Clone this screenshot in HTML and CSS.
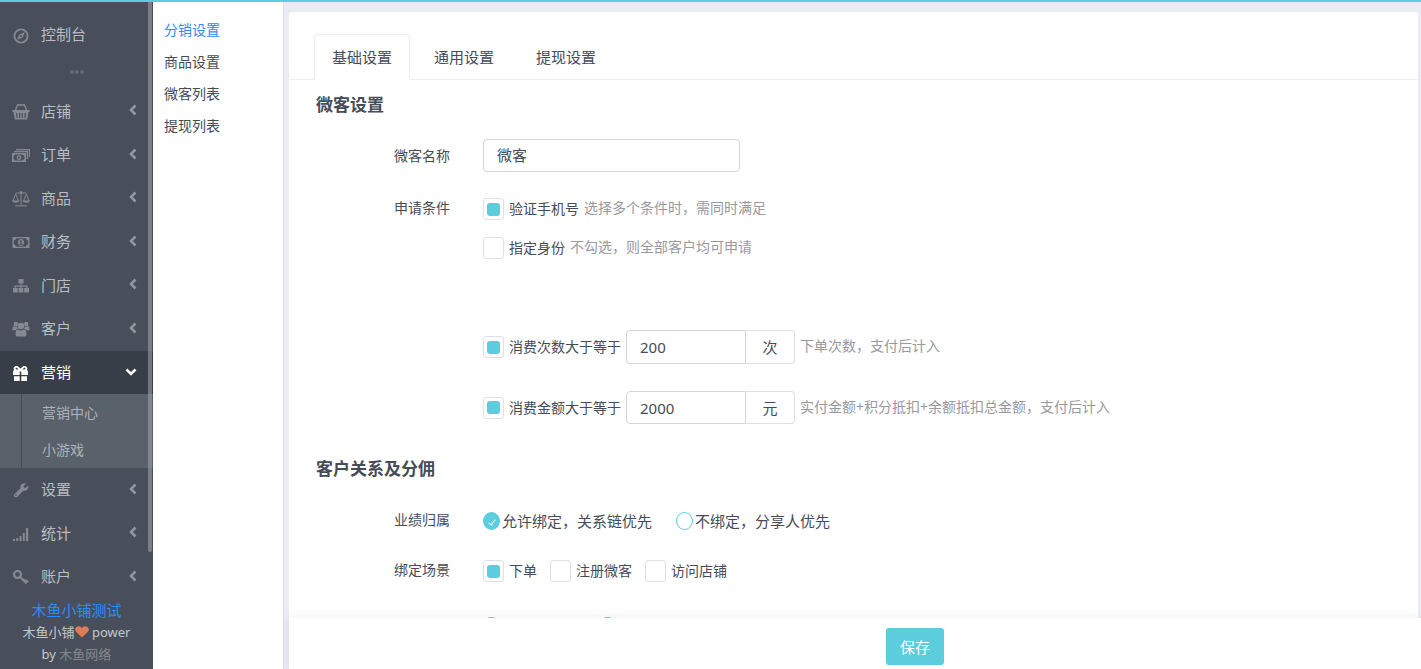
FILE: index.html
```html
<!DOCTYPE html>
<html lang="zh-CN">
<head>
<meta charset="utf-8">
<title>分销设置</title>
<link rel="stylesheet" href="styles.css">
</head>
<body>
<div class="app">
  <aside class="sidebar">
    <a class="nav-link home" href="#">
      <svg class="icon" viewBox="0 0 18 18"><circle cx="9" cy="9" r="6.6" fill="none" stroke="currentColor" stroke-width="1.8"/><path fill-rule="evenodd" d="M12.8 5.2 10.7 10.6 5.2 12.8 7.3 7.4ZM9 8a1 1 0 1 0 0 2 1 1 0 0 0 0-2Z"/></svg>
      <span>控制台</span>
    </a>
    <div class="divider"><i></i><i></i><i></i></div>
    <nav class="nav">
      <a class="nav-link" href="#">
        <svg class="icon" viewBox="0 0 18 18"><path d="M3.500 7 5.500 2h7l2 5" fill="none" stroke="currentColor" stroke-width="1.300"/><path fill-rule="evenodd" d="M.5 7h17v2h-1l-1.300 7.500H2.800L1.500 9h-1ZM4 10l.6 5h1.100L5.300 10Zm3 0 .2 5h1.100V10Zm2.700 0v5h1.100l.2-5Zm3 0-.4 5h1.100l.6-5Z"/></svg>
        <span>店铺</span>
        <svg class="arrow" viewBox="0 0 8 12"><path d="M6.500 1.500 2 6l4.500 4.500"/></svg>
      </a>
      <a class="nav-link" href="#">
        <svg class="icon" viewBox="0 0 18 18"><path d="M4 3h14v8h-1.200V4.200H4ZM2 5h14v8h-1.200V6.200H2Z"/><path fill-rule="evenodd" d="M0 7h14v9H0ZM3 8.500A2 2 0 0 1 1.500 10v3A2 2 0 0 1 3 14.500h8a2 2 0 0 1 1.500-1.500v-3A2 2 0 0 1 11 8.500ZM7 9c1.400 0 2.300 1.100 2.300 2.500S8.400 14 7 14s-2.300-1.100-2.300-2.500S5.600 9 7 9Zm0 1.200c-.6 0-.9.6-.9 1.300s.3 1.300.9 1.300.9-.6.9-1.300-.3-1.300-.9-1.300Z"/></svg>
        <span>订单</span>
        <svg class="arrow" viewBox="0 0 8 12"><path d="M6.500 1.500 2 6l4.500 4.500"/></svg>
      </a>
      <a class="nav-link" href="#">
        <svg class="icon" viewBox="0 0 18 18"><path d="M9 1v14.500M3.500 3h11M3 15.900h12M3.700 4 .9 11M3.700 4l2.800 7M14.300 4l-2.800 7M14.300 4l2.800 7" fill="none" stroke="currentColor"/><circle cx="9" cy="2.600" r="1.300"/><path d="M0 10.500h7.400c-.5 3-6.900 3-7.400 0ZM10.600 10.500H18c-.5 3-6.900 3-7.400 0Z"/></svg>
        <span>商品</span>
        <svg class="arrow" viewBox="0 0 8 12"><path d="M6.500 1.500 2 6l4.500 4.500"/></svg>
      </a>
      <a class="nav-link" href="#">
        <svg class="icon" viewBox="0 0 18 18"><path fill-rule="evenodd" d="M.5 4h17v11H.5ZM4 5.300A2.200 2.200 0 0 1 1.800 7.500v4A2.200 2.200 0 0 1 4 13.700h10a2.200 2.200 0 0 1 2.200-2.200v-4A2.200 2.200 0 0 1 14 5.300ZM9 6c1.900 0 3 1.600 3 3.500S10.900 13 9 13s-3-1.600-3-3.500S7.100 6 9 6ZM7.500 8v.8h.9v2.300h-.9v.9h3v-.9h-.8V7.300h-.8Z"/></svg>
        <span>财务</span>
        <svg class="arrow" viewBox="0 0 8 12"><path d="M6.500 1.500 2 6l4.500 4.500"/></svg>
      </a>
      <a class="nav-link" href="#">
        <svg class="icon" viewBox="0 0 18 18"><path d="M6.500 2h5v4.500h-2v2h6V11H17v4.500h-4.800V11h2.100V9.700H9.600V11h1.800v4.500H6.600V11h1.800V9.700H3.700V11h2.100v4.500H1V11h1.500V8.500h6v-2h-2Z"/></svg>
        <span>门店</span>
        <svg class="arrow" viewBox="0 0 8 12"><path d="M6.500 1.500 2 6l4.500 4.500"/></svg>
      </a>
      <a class="nav-link" href="#">
        <svg class="icon" viewBox="0 0 18 18"><circle cx="3.800" cy="4" r="2.200"/><circle cx="14.200" cy="4" r="2.200"/><circle cx="9" cy="6" r="3.300"/><path d="M.5 10V8c0-1.500 1-2 2-1.700 1 .5 1.800.4 2.600 0 .1 1.300.4 2 1 2.700-1.200 0-2 .4-2.700 1.200H1.500C.9 10.200.5 10.100.5 10ZM17.500 10V8c0-1.500-1-2-2-1.700-1 .5-1.800.4-2.600 0-.1 1.300-.4 2-1 2.700 1.200 0 2 .4 2.700 1.200h1.900c.6 0 1-.1 1-.2ZM3.500 14.200c0-3 .9-4.700 2.700-4.600 2 1.200 3.600 1.200 5.600 0 1.800-.1 2.700 1.600 2.700 4.600 0 1.400-.8 2.300-2.100 2.300H5.600c-1.300 0-2.100-.9-2.100-2.300Z"/></svg>
        <span>客户</span>
        <svg class="arrow" viewBox="0 0 8 12"><path d="M6.500 1.500 2 6l4.500 4.500"/></svg>
      </a>
      <div class="nav-group">
        <a class="nav-link active" href="#">
          <svg class="icon" viewBox="0 0 18 18"><path d="M1 7.500 2 6C.8 3.500 3.300 1.200 5.700 2.300L8.500 4.500l2.800-2.200C13.700 1.200 16.200 3.500 15 6l1 1.500V11H9.300V7.500H7.700V11H1ZM3.500 4.500c.3 1 1.500 1.200 3 1C5.200 3.500 3.700 3.100 3.500 4.500Zm10 0c-.2-1.400-1.700-1-3 1 1.500.2 2.700 0 3-1Z" fill-rule="evenodd"/><path d="M2 12.300h5.700V17H2ZM9.300 12.300H15V17H9.300Z"/></svg>
          <span>营销</span>
          <svg class="arrow down" viewBox="0 0 12 8"><path d="M1.500 1.500 6 6l4.500-4.500"/></svg>
        </a>
        <div class="subnav">
          <a href="#">营销中心</a>
          <a href="#">小游戏</a>
        </div>
      </div>
      <a class="nav-link" href="#">
        <svg class="icon" viewBox="0 0 18 18"><path fill-rule="evenodd" d="M16.400 5.200c.4 3-2.300 5.300-5.200 4.500l-6 6.200c-1.800 1.500-4.300-.8-2.900-2.700l6.200-5.800c-.8-3 1.400-5.500 4.700-5.200l.7.700L11.500 5l.4 1.600 1.700.3 2.300-2.200ZM4 13.300a.8.800 0 1 0 0 1.600.8.800 0 0 0 0-1.600Z"/></svg>
        <span>设置</span>
        <svg class="arrow" viewBox="0 0 8 12"><path d="M6.500 1.500 2 6l4.500 4.500"/></svg>
      </a>
      <a class="nav-link" href="#">
        <svg class="icon" viewBox="0 0 18 18"><path d="M1 14h2v2H1ZM4.200 13h2v3h-2ZM7.500 11h2v5h-2ZM10.800 8h2v8h-2ZM14 3h2.200v13H14Z"/></svg>
        <span>统计</span>
        <svg class="arrow" viewBox="0 0 8 12"><path d="M6.500 1.500 2 6l4.500 4.500"/></svg>
      </a>
      <a class="nav-link" href="#">
        <svg class="icon" viewBox="0 0 18 18"><circle cx="5.500" cy="6.500" r="3.500" fill="none" stroke="currentColor" stroke-width="2.200"/><path d="m8 8.800 6.500 6.700M11 12.500l1.500-1.700M12.500 14l1.700-1.700 2 1.900" fill="none" stroke="currentColor" stroke-width="1.800"/></svg>
        <span>账户</span>
        <svg class="arrow" viewBox="0 0 8 12"><path d="M6.500 1.500 2 6l4.500 4.500"/></svg>
      </a>
    </nav>
    <footer class="credit">
      <a class="shop" href="#">木鱼小铺测试</a>
      <p>木鱼小铺<svg class="heart" viewBox="0 0 14 12"><path d="M7 11.600 1.300 6C-1.300 3.200 1 .2 3.700.2 5.300.2 6.400 1 7 2.200 7.600 1 8.700.2 10.300.2c2.700 0 5 3 2.400 5.800Z"/></svg> power<br>by <a class="company" href="#">木鱼网络</a></p>
    </footer>
    <div class="scrollbar"></div>
  </aside>

  <nav class="section-nav">
    <a class="current" href="#">分销设置</a>
    <a href="#">商品设置</a>
    <a href="#">微客列表</a>
    <a href="#">提现列表</a>
  </nav>

  <form class="main">
    <div class="viewport">
      <div class="card">
        <div class="tabs" role="tablist">
          <button class="tab selected" type="button" role="tab" aria-selected="true">基础设置</button>
          <button class="tab" type="button" role="tab" aria-selected="false">通用设置</button>
          <button class="tab" type="button" role="tab" aria-selected="false">提现设置</button>
        </div>

        <h2>微客设置</h2>
        <div class="row row-name">
          <label class="field" for="name">微客名称</label>
          <input class="text name" id="name" type="text" value="微客">
        </div>
        <div class="row row-conditions">
          <span class="field">申请条件</span>
          <div class="conditions">
            <div class="line">
              <label class="option"><input class="check" type="checkbox" checked>验证手机号</label>
              <span class="hint">选择多个条件时，需同时满足</span>
            </div>
            <div class="line">
              <label class="option"><input class="check" type="checkbox">指定身份</label>
              <span class="hint">不勾选，则全部客户均可申请</span>
            </div>
            <div class="line thresholds">
              <label class="option"><input class="check" type="checkbox" checked>消费次数大于等于</label>
              <div class="group"><input class="text" type="text" value="200" aria-label="消费次数"><span class="unit">次</span></div>
              <span class="hint">下单次数，支付后计入</span>
            </div>
            <div class="line amount">
              <label class="option"><input class="check" type="checkbox" checked>消费金额大于等于</label>
              <div class="group"><input class="text" type="text" value="2000" aria-label="消费金额"><span class="unit">元</span></div>
              <span class="hint">实付金额+积分抵扣+余额抵扣总金额，支付后计入</span>
            </div>
          </div>
        </div>

        <h2 class="relations">客户关系及分佣</h2>
        <div class="row row-owner">
          <span class="field">业绩归属</span>
          <div class="radios">
            <label class="choice"><input class="radio" type="radio" name="owner" checked>允许绑定，关系链优先</label>
            <label class="choice"><input class="radio" type="radio" name="owner">不绑定，分享人优先</label>
          </div>
        </div>
        <div class="row row-scene">
          <span class="field">绑定场景</span>
          <div class="checks">
            <label class="option"><input class="check" type="checkbox" checked>下单</label>
            <label class="option"><input class="check" type="checkbox">注册微客</label>
            <label class="option"><input class="check" type="checkbox">访问店铺</label>
          </div>
        </div>
        <div class="row row-more">
          <span class="field"></span>
          <div class="radios wide">
            <input class="radio" type="radio" name="more" aria-label="是">
            <input class="radio" type="radio" name="more" aria-label="否">
          </div>
        </div>
      </div>
    </div>
    <div class="actions"><button class="save" type="submit">保存</button></div>
  </form>
</div>
</body>
</html>
```
FILE: styles.css
```css
* { box-sizing: border-box; }

body {
  margin: 0;
  color: #454c58;
  font: 14px/22px "Noto Sans", "Noto Sans CJK SC", sans-serif;
}

a { color: inherit; text-decoration: none; }
button, input { font: inherit; color: inherit; margin: 0; }

.app {
  display: grid;
  grid-template-columns: 153px 131px minmax(0, 1fr);
  height: 100vh;
  border-top: 2px solid #5bcddd;
  background: #e9ecf2;
  overflow: hidden;
}

/* Sidebar */
.sidebar {
  position: relative;
  display: flex;
  flex-direction: column;
  min-height: 0;
  background: #484f5a;
  color: #b9bdc3;
}

.nav-link {
  display: flex;
  align-items: center;
  gap: 11px;
  height: 43px;
  padding: 0 16px 2px 12px;
  font-size: 15px;
}

.home { margin-top: 11px; }
.icon { width: 18px; height: 18px; margin-top: 2px; fill: currentColor; color: #858a92; }
.home .icon { margin-top: 4px; }
.arrow { width: 8px; height: 12px; margin: 0 0 1px auto; fill: none; stroke: #9298a0; stroke-width: 2.5; }
.arrow.down { width: 12px; height: 8px; margin-bottom: 0; stroke: #fff; }

.divider {
  display: flex;
  justify-content: center;
  align-items: center;
  gap: 1px;
  height: 34px;
  padding-bottom: 2px;
}
.divider i { width: 4px; height: 4px; border-radius: 50%; background: #646a74; }

.nav {
  flex: 1;
  display: flex;
  flex-direction: column;
  justify-content: space-between;
}

.active { background: #383e47; color: #fff; }
.active .icon { color: #fff; }

.subnav {
  display: grid;
  margin-left: 21px;
  padding-left: 20px;
  border-left: 1px solid #454c56;
  line-height: 37px;
}
.nav-group { background: #59616b; color: #adb2b9; }

.credit { padding-bottom: 4px; text-align: center; font-size: 13px; color: #c3c7cc; }
.credit p { margin: 0; }
.shop { display: block; font-size: 15px; color: #288cff; }
.company { color: #85888d; }
.heart { width: 14px; height: 12px; vertical-align: -1px; fill: #e07b56; }

.scrollbar {
  position: absolute;
  top: 0;
  right: 1px;
  width: 4px;
  height: 82.5%;
  border-radius: 0 0 2px 2px;
  background: rgba(170, 170, 170, .52);
}

/* Section links */
.section-nav {
  display: flex;
  flex-direction: column;
  gap: 10px;
  padding: 17px 11px;
  border-right: 1px solid #dbe0e8;
  background: #fff;
}
.current { color: #2a8cff; }

/* Settings form */
.main {
  display: flex;
  flex-direction: column;
  min-height: 0;
  padding-left: 5px;
}

.viewport { flex: 1; min-height: 0; overflow: hidden; padding: 10px 3px 0 0; }
.card { padding-top: 22px; border-radius: 3px; background: #fff; }

.tabs {
  display: flex;
  gap: 6px;
  padding-left: 25px;
  box-shadow: inset 0 -1px #ebedf2;
}
.tab {
  height: 46px;
  padding: 0 17px 2px;
  border: 1px solid transparent;
  border-bottom: 0;
  border-radius: 4px 4px 0 0;
  background: none;
  font-size: 15px;
}
.selected { border-color: #ebedf2; background: #fff; }

h2 {
  margin: 13px 0 0;
  padding-left: 27px;
  font-size: 17px;
  line-height: 24px;
  font-weight: 700;
}
.relations { margin-top: 33px; }

.row {
  display: grid;
  grid-template-columns: 161px minmax(0, 1fr);
  column-gap: 33px;
}
.field { text-align: right; line-height: 20px; }

.row-name { margin-top: 22px; align-items: center; }
.row-conditions { margin-top: 26px; }
.row-owner { margin-top: 29px; }
.row-scene { margin-top: 28px; }
.row-more { margin-top: 33px; height: 54px; }

.text {
  height: 33px;
  padding: 0 13px;
  border: 1px solid #d3d5da;
  border-radius: 4px;
  background: #fff;
  font-size: 15px;
  outline: 0;
}
.name { width: 257px; padding-bottom: 2px; }

.line { display: flex; align-items: center; gap: 5px; white-space: nowrap; }
.line + .line { margin-top: 17px; }
.line + .thresholds { margin-top: 71px; }
.line + .amount { margin-top: 27px; }

.option { display: flex; align-items: center; gap: 5px; }
.hint { padding-bottom: 2px; line-height: 20px; color: #98999f; }

.check {
  display: grid;
  place-items: center;
  appearance: none;
  width: 21px;
  height: 22px;
  border: 1px solid #dce0e8;
  border-radius: 3px;
  background: #fff;
}
.check:checked::before {
  content: "";
  width: 13px;
  height: 13px;
  border-radius: 3px;
  background: #5bcddd;
}

.group { display: flex; height: 34px; }
.group .text { width: 120px; height: auto; border-radius: 4px 0 0 4px; }
.amount .group { height: 33px; }
.unit {
  display: grid;
  place-items: center;
  width: 49px;
  border: 1px solid #dce0e8;
  border-left: 0;
  border-radius: 0 4px 4px 0;
  font-size: 15px;
}

.radios { display: flex; align-items: center; gap: 24px; height: 22px; font-size: 15px; }
.wide { gap: 99px; }
.choice { display: flex; align-items: center; gap: 2px; }
.radio {
  display: grid;
  place-items: center;
  appearance: none;
  width: 17px;
  height: 18px;
  border: 1px solid #5bcddd;
  border-radius: 50%;
  background: #fff;
}
.radio:checked { background: #5bcddd; }
.radio:checked::before {
  content: "";
  width: 3px;
  height: 6px;
  border: solid #fff;
  border-width: 0 1px 1px 0;
  transform: rotate(35deg);
}

.checks { display: flex; gap: 13px; }

.actions {
  position: relative;
  display: flex;
  justify-content: center;
  padding: 10px 0 4px 120px;
  background: #fff;
  box-shadow: 0 0 10px rgba(0, 0, 0, .08);
}
.save {
  height: 37px;
  padding: 0 14px;
  border: 0;
  border-radius: 3px;
  background: #5bcddd;
  color: #fff;
  font-size: 15px;
}
```
